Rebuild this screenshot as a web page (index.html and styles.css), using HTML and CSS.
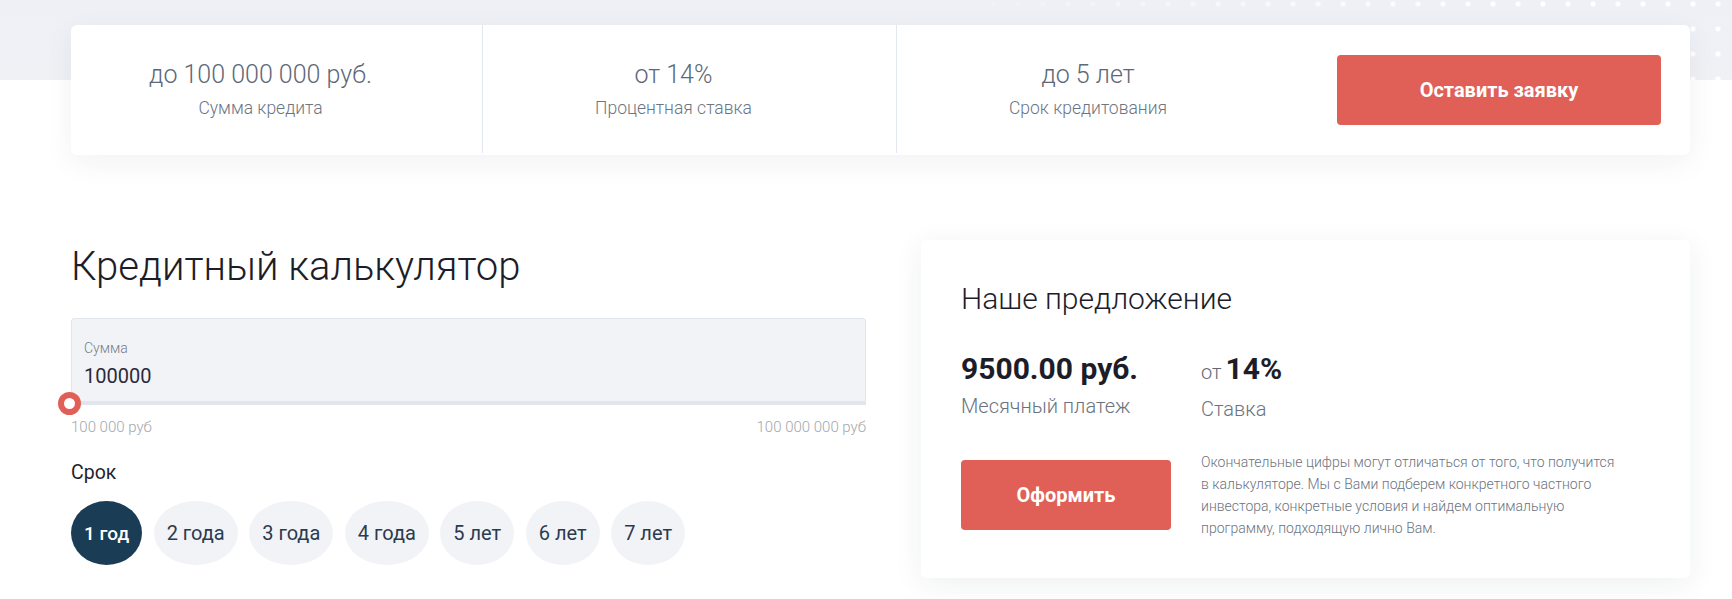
FILE: index.html
```html
<!DOCTYPE html>
<html lang="ru">
<head>
<meta charset="utf-8">
<title>Кредитный калькулятор</title>
<link rel="stylesheet" href="styles.css">
</head>
<body>
<div class="page">
  <section class="top">
    <div class="stats-card">
      <div class="stat">
        <div class="stat-value">до 100 000 000 руб.</div>
        <div class="stat-label">Сумма кредита</div>
      </div>
      <div class="stat">
        <div class="stat-value">от 14%</div>
        <div class="stat-label">Процентная ставка</div>
      </div>
      <div class="stat stat-last">
        <div class="stat-value">до 5 лет</div>
        <div class="stat-label">Срок кредитования</div>
      </div>
      <div class="stat-action">
        <button class="btn btn-apply">Оставить заявку</button>
      </div>
    </div>
  </section>

  <section class="calc">
    <div class="calc-left">
      <h1 class="calc-title">Кредитный калькулятор</h1>
      <div class="field">
        <div class="field-label">Сумма</div>
        <div class="field-value">100000</div>
      </div>
      <div class="track">
        <span class="knob"></span>
      </div>
      <div class="range-labels">
        <span>100 000 руб</span>
        <span>100 000 000 руб</span>
      </div>
      <div class="term-label">Срок</div>
      <div class="pills">
        <button class="pill pill-active">1 год</button>
        <button class="pill">2 года</button>
        <button class="pill">3 года</button>
        <button class="pill">4 года</button>
        <button class="pill">5 лет</button>
        <button class="pill">6 лет</button>
        <button class="pill">7 лет</button>
      </div>
    </div>

    <div class="offer-card">
      <h2 class="offer-title">Наше предложение</h2>
      <div class="offer-grid">
        <div class="offer-item">
          <div class="offer-value">9500.00 руб.</div>
          <div class="offer-label">Месячный платеж</div>
        </div>
        <div class="offer-item">
          <div class="offer-value"><span class="offer-prefix">от</span>14%</div>
          <div class="offer-label">Ставка</div>
        </div>
      </div>
      <div class="offer-bottom">
        <button class="btn btn-submit">Оформить</button>
        <p class="offer-note">Окончательные цифры могут отличаться от того, что получится<br>в калькуляторе. Мы с Вами подберем конкретного частного<br>инвестора, конкретные условия и найдем оптимальную<br>программу, подходящую лично Вам.</p>
      </div>
    </div>
  </section>
</div>
</body>
</html>
```
FILE: styles.css
```css
* { box-sizing: border-box; }
html, body { margin: 0; padding: 0; }
body {
  font-family: Roboto, "Noto Sans", "Liberation Sans", sans-serif;
  background: #fff;
  color: #1d1d29;
  width: 1732px;
  height: 599px;
  overflow: hidden;
}
.page { padding: 0 42px 0 71px; }

/* top band */
.top {
  position: relative;
  margin: 0 -42px 0 -71px;
  padding: 25px 42px 0 71px;
  background: linear-gradient(to bottom, #eff0f5 0, #f0f1f5 80px, #fff 80px);
}
.top::after {
  content: "";
  position: absolute;
  top: 0;
  left: 900px;
  right: 0;
  height: 80px;
  background-image: radial-gradient(circle at 12.5px 12.5px, #ffffff 0, #ffffff 2.2px, rgba(255,255,255,0) 2.9px);
  background-size: 25px 25px;
  background-position: 5.5px -8.5px;
  -webkit-mask-image: linear-gradient(to right, transparent 0, rgba(0,0,0,0.4) 30%, #000 75%);
  mask-image: linear-gradient(to right, transparent 0, rgba(0,0,0,0.4) 30%, #000 75%);
  z-index: 0;
}
.stats-card {
  position: relative;
  z-index: 1;
  height: 130px;
  background: #fff;
  border-radius: 6px;
  box-shadow: 0 8px 30px rgba(30, 40, 60, 0.06);
  display: grid;
  grid-template-columns: 412px 414px 414px 1fr;
  align-items: stretch;
}
.stat {
  border-right: 1px solid #e3e7f0;
  margin-bottom: 2px;
  padding-right: 32px;
  display: flex;
  flex-direction: column;
  align-items: center;
  justify-content: center;
  text-align: center;
}
.stat-last { border-right: 0; }
.stat-value {
  font-size: 25px;
  line-height: 28px;
  font-weight: 300;
  color: #5d6878;
}
.stat-label {
  margin-top: 9px;
  font-size: 17.5px;
  line-height: 20px;
  font-weight: 300;
  color: #6b7583;
}
.stat-action {
  display: flex;
  align-items: center;
  justify-content: flex-end;
  padding-right: 29px;
}
.btn {
  border: 0;
  border-radius: 4px;
  background: #e05f57;
  color: #fff;
  font-family: Roboto, "Noto Sans", "Liberation Sans", sans-serif;
  font-weight: 700;
  cursor: pointer;
}
.btn-apply {
  width: 324px;
  height: 70px;
  font-size: 20px;
}

/* calculator */
.calc {
  margin-top: 85px;
  display: grid;
  grid-template-columns: 795px 1fr;
  column-gap: 55px;
  align-items: start;
}
.calc-left { padding-top: 0; }
.calc-title {
  margin: 0;
  font-size: 40px;
  line-height: 54px;
  font-weight: 300;
  color: #1d1d29;
}
.field {
  margin-top: 24px;
  height: 83px;
  background: #f2f3f7;
  border: 1px solid #e1e5ee;
  border-bottom: 0;
  border-radius: 4px 4px 0 0;
  padding: 21px 12px 0 12px;
}
.field-label {
  font-size: 14px;
  line-height: 16px;
  font-weight: 300;
  color: #767c86;
}
.field-value {
  margin-top: 8px;
  font-size: 20px;
  line-height: 24px;
  font-weight: 400;
  color: #2a2a3a;
}
.track {
  position: relative;
  height: 4px;
  background: #e1e5ef;
}
.knob {
  position: absolute;
  left: -13px;
  top: -9px;
  width: 23px;
  height: 23px;
  border-radius: 50%;
  background: #fff;
  border: 6px solid #e05f57;
}
.range-labels {
  margin-top: 14px;
  display: flex;
  justify-content: space-between;
  font-size: 15px;
  line-height: 16px;
  font-weight: 300;
  color: #a3a7ae;
}
.term-label {
  margin-top: 27px;
  font-size: 19.5px;
  line-height: 22px;
  font-weight: 400;
  color: #1f1f2b;
}
.pills {
  margin-top: 17px;
  display: flex;
  gap: 11.5px;
}
.pill {
  height: 64px;
  padding: 0 13px;
  border: 0;
  border-radius: 50%;
  background: #f2f3f7;
  color: #2b3b4f;
  font-family: Roboto, "Noto Sans", "Liberation Sans", sans-serif;
  font-size: 20px;
  font-weight: 400;
  cursor: pointer;
}
.pill-active {
  background: #1a3c55;
  color: #fff;
  font-size: 19px;
  font-weight: 500;
}

/* offer card */
.offer-card {
  background: #fff;
  border-radius: 6px;
  box-shadow: 0 6px 30px rgba(30, 40, 60, 0.07);
  padding: 40px 20px 38px 40px;
  height: 338px;
}
.offer-title {
  margin: 0;
  font-size: 30px;
  line-height: 38px;
  font-weight: 300;
  color: #1d1d29;
}
.offer-grid {
  margin-top: 33px;
  display: grid;
  grid-template-columns: 240px 1fr;
}
.offer-value {
  font-size: 30px;
  line-height: 36px;
  font-weight: 700;
  color: #1d1d29;
}
.offer-prefix {
  font-size: 20px;
  font-weight: 300;
  color: #5f6875;
  margin-right: 4px;
}
.offer-label {
  margin-top: 7px;
  font-size: 20px;
  line-height: 24px;
  font-weight: 300;
  color: #6b7380;
}
.offer-bottom {
  margin-top: 30px;
  display: grid;
  grid-template-columns: 240px 1fr;
  align-items: center;
}
.btn-submit {
  width: 210px;
  height: 70px;
  font-size: 20px;
}
.offer-note {
  margin: 0;
  font-size: 14px;
  line-height: 22px;
  font-weight: 300;
  color: #6b7380;
  white-space: nowrap;
}
```
